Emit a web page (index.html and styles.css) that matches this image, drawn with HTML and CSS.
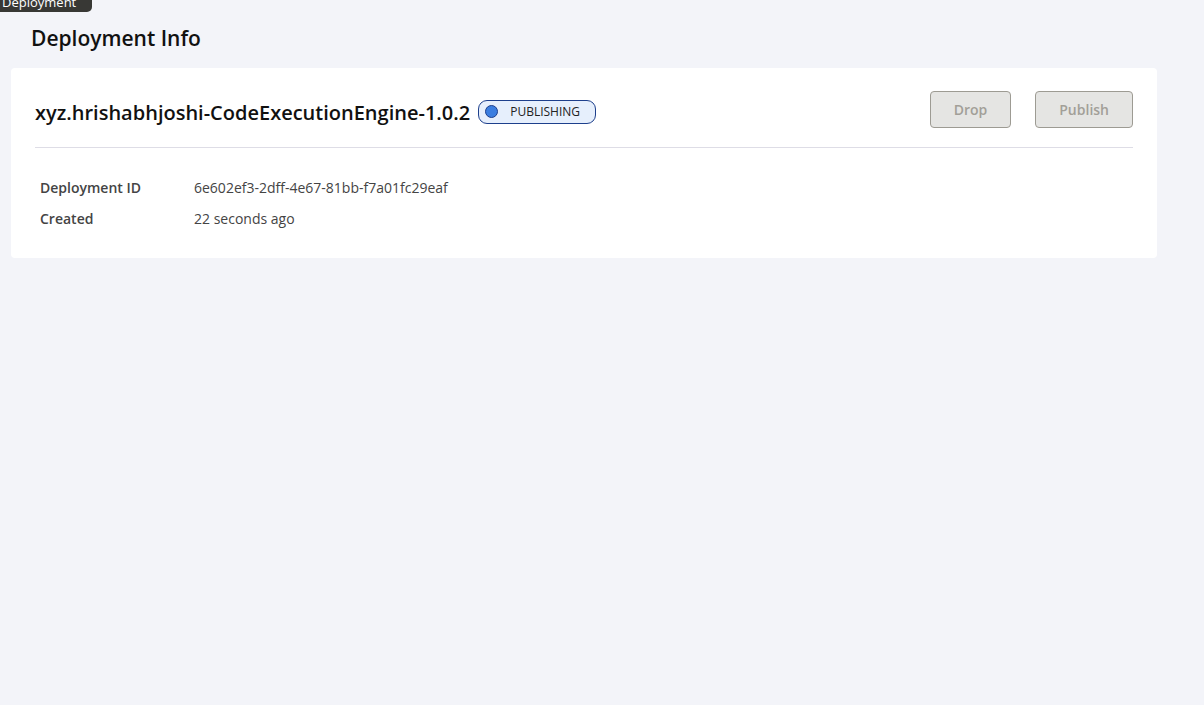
FILE: index.html
```html
<!DOCTYPE html>
<html lang="en">
<head>
    <meta charset="UTF-8">
    <title>Deployment Info</title>
    <link rel="stylesheet" href="styles.css">
</head>
<body>
    <div class="tooltip">Deployment</div>
    <div class="page">
        <h2 class="page-title">Deployment Info</h2>
        <div class="card">
            <div class="card-header">
                <div class="name">
                    <span class="pkg">xyz.hrishabhjoshi-CodeExecutionEngine-1.0.2</span>
                    <span class="badge"><span class="dot"></span>PUBLISHING</span>
                </div>
                <div class="actions">
                    <button disabled>Drop</button>
                    <button disabled>Publish</button>
                </div>
            </div>
            <table class="details">
                <tr>
                    <th>Deployment ID</th>
                    <td>6e602ef3-2dff-4e67-81bb-f7a01fc29eaf</td>
                </tr>
                <tr>
                    <th>Created</th>
                    <td>22 seconds ago</td>
                </tr>
            </table>
        </div>
    </div>
</body>
</html>
```

FILE: styles.css
```css
body {
    margin: 0;
    background: #f3f4f9;
    font-family: "Open Sans", "Noto Sans", sans-serif;
    color: #111;
}
.tooltip {
    position: absolute;
    top: 0;
    left: 0;
    width: 92px;
    height: 12px;
    background: #383835;
    color: #fff;
    font-size: 13px;
    line-height: 4px;
    border-radius: 0 0 5px 0;
    overflow: hidden;
    padding-left: 2px;
    box-sizing: border-box;
}
.page {
    padding: 22px 47px 0 11px;
}
.page-title {
    margin: 0 0 14px 20px;
    font-size: 21px;
    font-weight: 600;
    line-height: 32px;
}
.card {
    background: #fff;
    border-radius: 4px;
    padding: 23px 24px 29px 24px;
}
.card-header {
    display: flex;
    justify-content: space-between;
    align-items: flex-start;
    padding-bottom: 19px;
    border-bottom: 1px solid #dedde6;
}
.name {
    display: flex;
    align-items: center;
    margin-top: 7px;
}
.pkg {
    font-size: 20px;
    font-weight: 600;
    line-height: 30px;
    color: #111;
}
.badge {
    display: inline-flex;
    align-items: center;
    margin: 0 0 3px 8px;
    height: 24px;
    padding: 0 15px 0 6px;
    border: 1px solid #1d3f8c;
    border-radius: 9px;
    background: #e6effc;
    font-size: 12px;
    color: #222;
    box-sizing: border-box;
}
.dot {
    width: 13px;
    height: 13px;
    border-radius: 50%;
    background: #3b7ee0;
    border: 1px solid #1d3f8c;
    box-sizing: border-box;
    margin-right: 12px;
}
.actions {
    display: flex;
    gap: 24px;
}
.actions button {
    height: 37px;
    padding: 0 23px;
    border: 1px solid #9d9b93;
    border-radius: 4px;
    background: #e5e5e3;
    color: #a29f98;
    font-family: inherit;
    font-size: 14px;
    font-weight: 600;
}
.details {
    margin-top: 29px;
    border-collapse: collapse;
    font-size: 14px;
}
.details th {
    text-align: left;
    font-weight: 600;
    color: #444;
    width: 154px;
    padding: 0 0 10px 5px;
    line-height: 21px;
}
.details td {
    color: #444;
    padding: 0 0 10px 0;
    line-height: 21px;
}
.details tr:last-child th,
.details tr:last-child td {
    padding-bottom: 0;
}
```
